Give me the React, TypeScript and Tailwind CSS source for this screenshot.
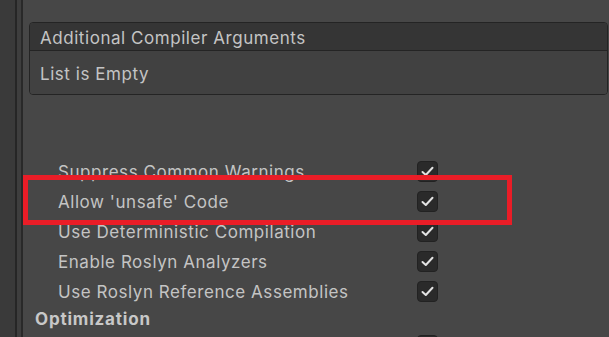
import React from "react";

const options = [
  "Suppress Common Warnings",
  "Allow 'unsafe' Code",
  "Use Deterministic Compilation",
  "Enable Roslyn Analyzers",
  "Use Roslyn Reference Assemblies",
];

const Check = () => (
  <div className="w-[21px] h-[21px] rounded-[4px] bg-[#2a2a2a] border border-[#222] flex items-center justify-center shrink-0">
    <svg width="13" height="11" viewBox="0 0 13 11" fill="none">
      <path d="M1.5 6 L4.8 9 L11.5 1.8" stroke="#e2e2e2" strokeWidth="2" strokeLinecap="round" strokeLinejoin="round" />
    </svg>
  </div>
);

const OptionRow = ({ label }: { label: string }) => (
  <div className="h-[30px] flex items-center">
    <span className="w-[359px] pl-[35px] pt-[4px] box-content shrink-0">{label}</span>
    <Check />
  </div>
);

export default function App() {
  return (
    <div
      className="relative w-[609px] h-[337px] overflow-hidden flex bg-[#474747] text-[#c4c4c4] text-[17px] tracking-[0.55px]"
      style={{ fontFamily: "Inter, 'Noto Sans', sans-serif" }}
    >
      {/* left gutter */}
      <div className="flex shrink-0 h-full">
        <div className="w-[15px] bg-[#3a3a3a]" />
        <div className="w-[2px] bg-[#262626]" />
        <div className="w-[4px] bg-[#3e3e3e]" />
        <div className="w-[2px] bg-[#292929]" />
      </div>

      <div className="flex-1 pt-[22px]">
        <div className="ml-[6px] mr-[1px] rounded-[4px] border border-[#242424] overflow-hidden">
          <div className="h-[28px] bg-[#353535] border-b border-[#242424] flex items-center pl-[10px]">
            <span className="pt-[4px]">Additional Compiler Arguments</span>
          </div>
          <div className="h-[43px] bg-[#414141] flex items-center pl-[10px]">
            <span className="pt-[4px]">List is Empty</span>
          </div>
        </div>

        <div className="mt-[61px]">
          {options.map((o) => (
            <OptionRow key={o} label={o} />
          ))}
          <div className="h-[24px] flex items-center pl-[12px] font-bold text-[#c8c8c8] tracking-[0.8px]">
            <span className="pt-[4px]">Optimization</span>
          </div>
          <OptionRow label="" />
        </div>
      </div>

      {/* highlight */}
      <div className="absolute left-[23px] top-[175px] w-[489px] h-[50px] border-[5px] border-[#ea1d27]" />
    </div>
  );
}
